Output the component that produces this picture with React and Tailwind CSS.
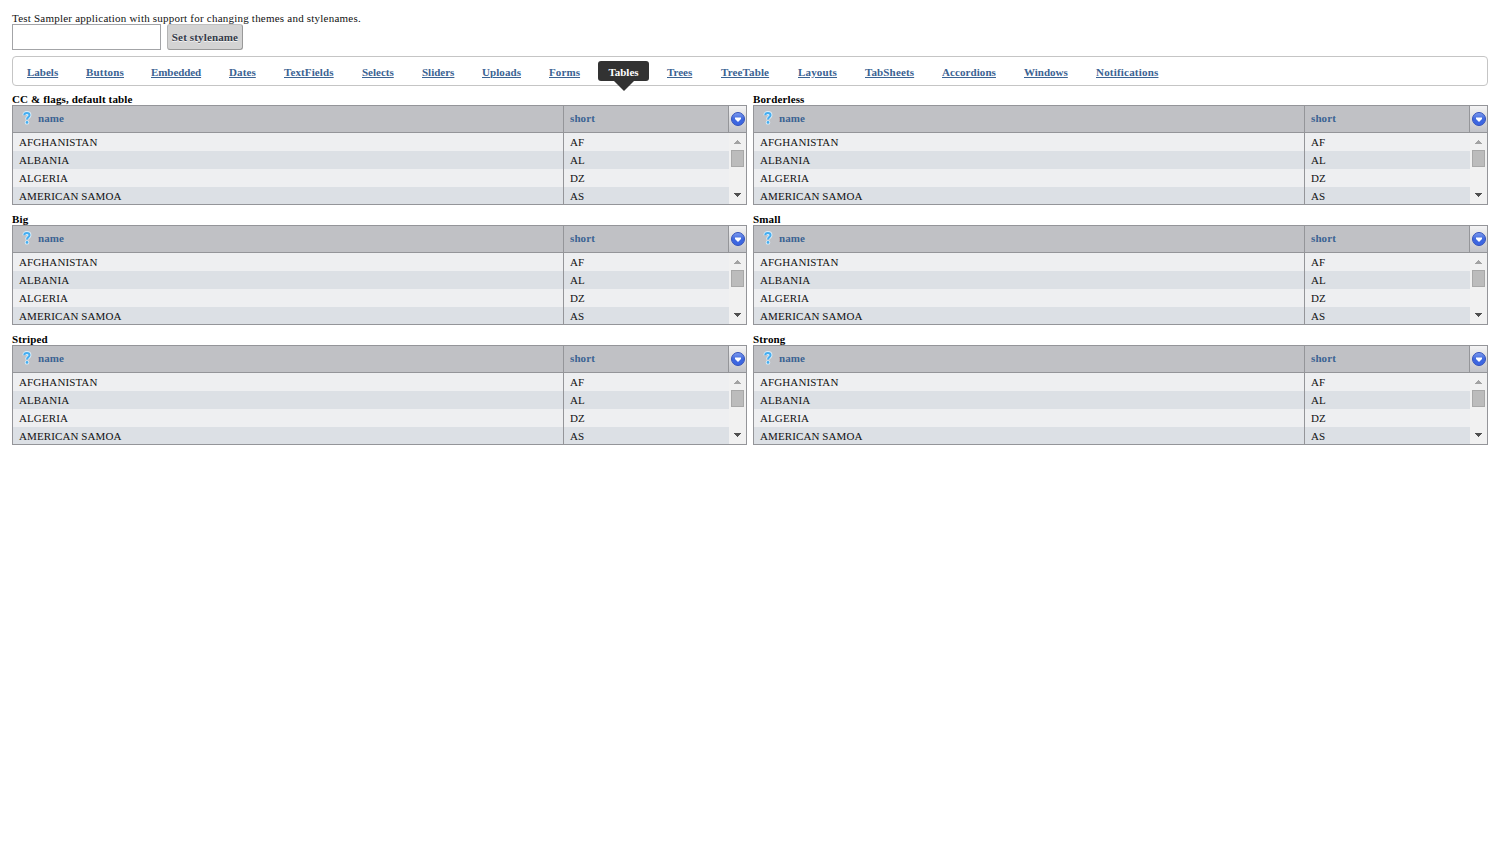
const NAV = [
  ['Labels', 'w-[59px]'],
  ['Buttons', 'w-[65px] tracking-[0.19px]'],
  ['Embedded', 'w-[78px] tracking-[-0.08px]'],
  ['Dates', 'w-[55px] tracking-[0.1px]'],
  ['TextFields', 'w-[78px] tracking-[0.12px]'],
  ['Selects', 'w-[60px]'],
  ['Sliders', 'w-[60px]'],
  ['Uploads', 'w-[67px] tracking-[0.07px]'],
  ['Forms', 'w-[59px] tracking-[0.1px]'],
  ['Tables', 'w-[59px]'],
  ['Trees', 'w-[54px]'],
  ['TreeTable', 'w-[77px] tracking-[0.14px]'],
  ['Layouts', 'w-[67px] tracking-[0.16px]'],
  ['TabSheets', 'w-[77px] tracking-[0.14px]'],
  ['Accordions', 'w-[82px] tracking-[0.08px]'],
  ['Windows', 'w-[72px]'],
  ['Notifications', 'w-[80px] tracking-[0.2px]'],
];

const ROWS = [
  ['AFGHANISTAN', 'AF'],
  ['ALBANIA', 'AL'],
  ['ALGERIA', 'DZ'],
  ['AMERICAN SAMOA', 'AS'],
];

const TABLES = ['CC & flags, default table', 'Borderless', 'Big', 'Small', 'Striped', 'Strong'];

function HelpIcon() {
  return (
    <svg width="10" height="14" viewBox="0 0 10 14" className="ml-[9px] mr-[6px] -mt-0.5 shrink-0">
      <path d="M2.3 4.3C2.3 2.6 3.5 2 4.9 2C6.5 2 7.5 2.8 7.5 4.2C7.5 6.1 5 6.2 5 8.6" fill="none" stroke="#d9eefb" strokeWidth="3.8" />
      <circle cx="5" cy="11.4" r="2.2" fill="#d9eefb" />
      <path d="M2.3 4.3C2.3 2.6 3.5 2 4.9 2C6.5 2 7.5 2.8 7.5 4.2C7.5 6.1 5 6.2 5 8.6" fill="none" stroke="#45adf0" strokeWidth="2" />
      <circle cx="5" cy="11.4" r="1.3" fill="#45adf0" />
    </svg>
  );
}

function ColumnSelector() {
  return (
    <div className="flex w-[18px] shrink-0 items-center justify-center border-l border-[#949599] bg-linear-to-b from-[#f3f3f4] to-[#c3c4c8]">
      <svg width="16" height="16" viewBox="0 0 16 16" className="shrink-0">
        <defs>
          <linearGradient id="orb" x1="0" y1="0" x2="0" y2="1">
            <stop offset="0" stopColor="#7f9df0" />
            <stop offset="0.5" stopColor="#3f68de" />
            <stop offset="1" stopColor="#3a66e4" />
          </linearGradient>
        </defs>
        <circle cx="8" cy="8" r="6.5" fill="url(#orb)" stroke="#3552ba" strokeWidth="1" />
        <path d="M5 6.5h6v2h-1v1H9v1H7v-1H6v-1H5z" fill="#fff" />
      </svg>
    </div>
  );
}

function ScrollBar() {
  return (
    <div className="flex w-[17px] shrink-0 flex-col items-center bg-[#f1f1f1]">
      <svg width="17" height="17" viewBox="0 0 17 17" className="shrink-0">
        <path d="M8 7h1v1h1v1h1v1h1v1H5v-1h1V9h1V8h1z" fill="#a3a3a3" />
      </svg>
      <div className="h-[17px] w-[13px] shrink-0 border border-[#a8a8a8] bg-[#bcbcbc]" />
      <div className="grow" />
      <svg width="17" height="17" viewBox="0 0 17 17" className="shrink-0">
        <path d="M5 6h7v1h-1v1h-1v1H9v1H8V9H7V8H6V7H5z" fill="#505050" />
      </svg>
    </div>
  );
}

function CountryTable({ title }) {
  return (
    <section className="h-[120px] w-[735px]">
      <h2 className="h-3 whitespace-nowrap font-bold leading-[12px] tracking-[0.14px] text-black">{title}</h2>
      <div className="h-[100px] border border-[#949599]">
        <div className="flex h-[27px] border-b border-[#949599] bg-[#c0c1c5] font-bold leading-[24px] text-[#3b6393]">
          <div className="flex w-[551px] border-r border-[#949599]">
            <div className="flex items-center">
              <HelpIcon />
            </div>
            <span className="tracking-[0.1px]">name</span>
          </div>
          <div className="grow pl-[6px] tracking-[0.1px]">short</div>
          <ColumnSelector />
        </div>
        <div className="flex h-[71px] overflow-hidden">
          <div className="grow">
            {ROWS.map(([name, code], i) => (
              <div key={code} className={`flex h-[18px] leading-[18px] text-[#111] ${i % 2 ? 'bg-[#dce0e5]' : 'bg-[#eeeff1]'}`}>
                <div className="w-[551px] border-r border-[#949599] pl-[6px] tracking-[0.1px]">{name}</div>
                <div className="pl-[6px]">{code}</div>
              </div>
            ))}
          </div>
          <ScrollBar />
        </div>
      </div>
    </section>
  );
}

export default function App() {
  return (
    <main className="h-[850px] w-[1500px] overflow-hidden bg-white px-3 pt-3 font-['Liberation_Serif','Times_New_Roman',serif] text-[11px] text-[#111]">
      <p className="h-3 whitespace-nowrap leading-[13px] tracking-[0.22px]">Test Sampler application with support for changing themes and stylenames.</p>
      <div className="flex h-[26px] gap-[6px]">
        <input aria-label="Stylename" className="h-[26px] w-[149px] border border-[#a3a4a7] bg-white px-1 outline-none" />
        <button className="h-[26px] w-[76px] whitespace-nowrap rounded-[3px] border border-t-[#c0c0c0] border-r-[#999] border-b-[#999] border-l-[#b4b4b4] bg-[#d3d3d3] text-center font-bold leading-[24px] tracking-[0.14px] text-[#343a49] [text-shadow:0_1px_0_#f5f5f5]">
          Set stylename
        </button>
      </div>
      <nav className="mt-[6px] flex h-[30px] rounded-[4px] border border-[#c5c5c5] pl-[14px] pt-1">
        {NAV.map(([label, cls]) =>
          label === 'Tables' ? (
            <div key={label} className={`${cls} h-[30px] shrink-0`}>
              <div className="-ml-[10px] flex w-[51px] flex-col items-center">
                <a className="block h-5 w-full rounded-[3px] bg-[#323232] text-center font-bold leading-[22px] text-white">{label}</a>
                <svg width="20" height="10" viewBox="0 0 20 10" className="block">
                  <path d="M0 0h20L10 10z" fill="#323232" />
                </svg>
              </div>
            </div>
          ) : (
            <div key={label} className={`${cls} shrink-0 whitespace-nowrap font-bold leading-[22px] text-[#3b6393]`}>
              <a className="underline">{label}</a>
            </div>
          )
        )}
      </nav>
      <div className="mt-[7px] grid grid-cols-[735px_735px] gap-x-[6px]">
        {TABLES.map((title) => (
          <CountryTable key={title} title={title} />
        ))}
      </div>
    </main>
  );
}
